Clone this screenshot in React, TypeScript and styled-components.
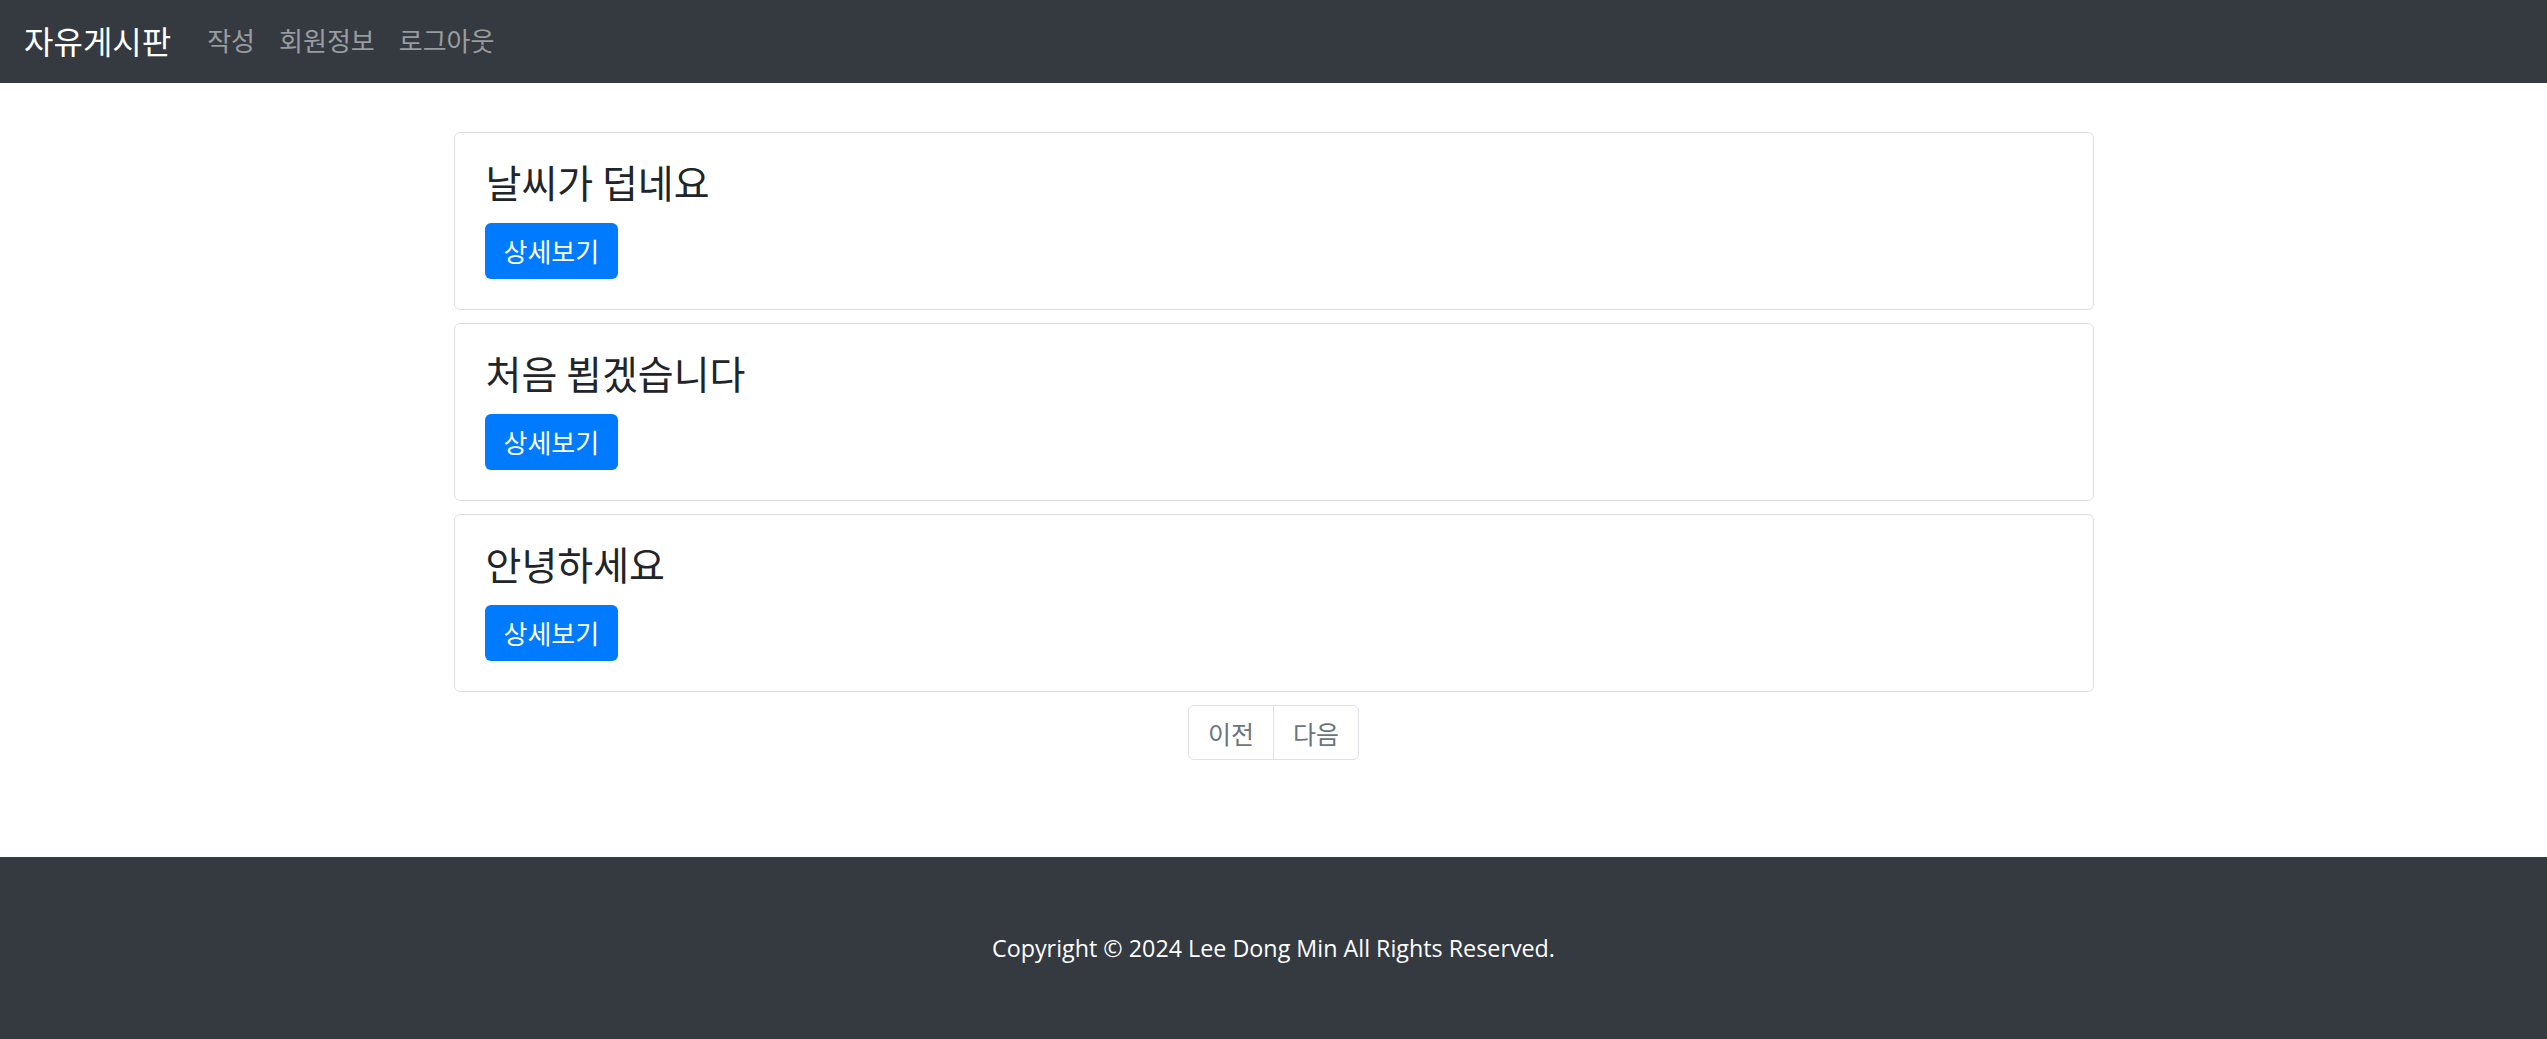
import React from "react";
import styled, { createGlobalStyle } from "styled-components";

const GlobalStyle = createGlobalStyle`
  html, body {
    margin: 0;
    padding: 0;
    background: #ffffff;
    font-family: "Noto Sans CJK KR", "Noto Sans", sans-serif;
    color: #212529;
  }
  * { box-sizing: border-box; }
`;

const Page = styled.div`
  display: flex;
  flex-direction: column;
  min-height: 100vh;
`;

const Navbar = styled.nav`
  height: 83px;
  background: #343a40;
  display: flex;
  align-items: center;
  padding: 0 24px 3px;
`;

const Brand = styled.a`
  font-size: 32px;
  line-height: 45px;
  color: #ffffff;
  margin-right: 24px;
  text-decoration: none;
`;

const NavList = styled.div`
  display: flex;
  align-items: center;
`;

const NavLink = styled.a`
  font-size: 26px;
  line-height: 36px;
  color: rgba(255, 255, 255, 0.5);
  padding: 0 12px;
  text-decoration: none;
`;

const Main = styled.main`
  display: flex;
  flex-direction: column;
  align-items: center;
  padding-top: 49px;
`;

const CardList = styled.div`
  width: 1640px;
  display: flex;
  flex-direction: column;
  gap: 13px;
`;

const Card = styled.div`
  height: 178px;
  border: 1px solid rgba(0, 0, 0, 0.125);
  border-radius: 6px;
  padding: 29px 30px 30px 30px;
  display: flex;
  flex-direction: column;
  align-items: flex-start;
`;

const CardTitle = styled.h4`
  margin: -2px 0 20px 1px;
  font-size: 39px;
  line-height: 43px;
  font-weight: 400;
  color: #212529;
`;

const PrimaryButton = styled.button`
  height: 56px;
  padding: 0 19px;
  border: none;
  border-radius: 6px;
  background: #007bff;
  color: #ffffff;
  font-family: inherit;
  font-size: 26px;
  line-height: 36px;
  cursor: pointer;
`;

const Pagination = styled.div`
  margin-top: 13px;
  display: flex;
  border: 1px solid #dee2e6;
  border-radius: 6px;
  overflow: hidden;
`;

const PageLink = styled.a<{ $first?: boolean }>`
  height: 53px;
  width: ${(p) => (p.$first ? "84px" : "85px")};
  display: flex;
  align-items: center;
  justify-content: center;
  font-size: 25px;
  color: #6c757d;
  text-decoration: none;
  border-left: ${(p) => (p.$first ? "none" : "1px solid #dee2e6")};
`;

const Footer = styled.footer`
  margin-top: 97px;
  height: 182px;
  background: #343a40;
  display: flex;
  align-items: center;
  justify-content: center;
`;

const Copyright = styled.p`
  margin: 0;
  color: #ffffff;
  font-family: "Open Sans", "Noto Sans", sans-serif;
  font-size: 23.3px;
  line-height: 36px;
`;

const posts = ["날씨가 덥네요", "처음 뵙겠습니다", "안녕하세요"];

export default function App() {
  return (
    <Page>
      <GlobalStyle />
      <Navbar>
        <Brand href="#">자유게시판</Brand>
        <NavList>
          <NavLink href="#">작성</NavLink>
          <NavLink href="#">회원정보</NavLink>
          <NavLink href="#">로그아웃</NavLink>
        </NavList>
      </Navbar>
      <Main>
        <CardList>
          {posts.map((t) => (
            <Card key={t}>
              <CardTitle>{t}</CardTitle>
              <PrimaryButton>상세보기</PrimaryButton>
            </Card>
          ))}
        </CardList>
        <Pagination>
          <PageLink $first href="#">이전</PageLink>
          <PageLink href="#">다음</PageLink>
        </Pagination>
      </Main>
      <Footer>
        <Copyright>Copyright © 2024 Lee Dong Min All Rights Reserved.</Copyright>
      </Footer>
    </Page>
  );
}
